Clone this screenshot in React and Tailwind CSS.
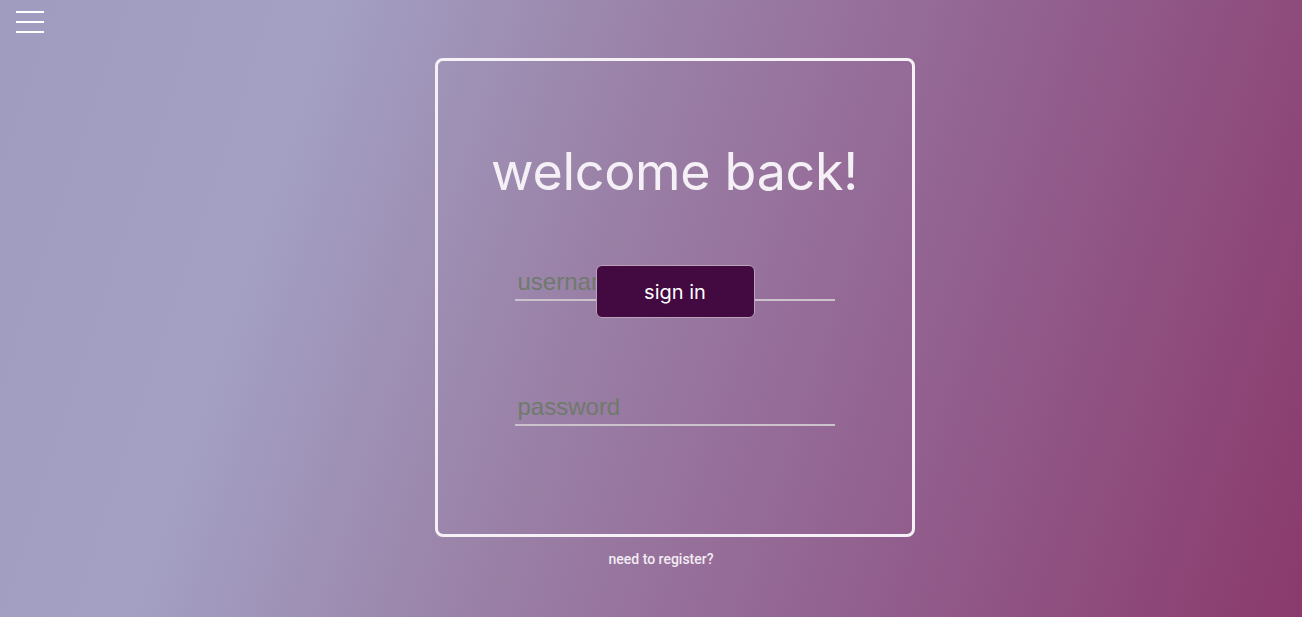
import { useState } from "react";

const App = () => {

  // =========================
  // STATES
  // =========================
  const [username, setUsername] = useState("");

  const [password, setPassword] = useState("");

  return (

    <div className="
      relative
      min-h-screen
      h-[617px]
      overflow-hidden
      bg-[linear-gradient(108deg,#9f9cbf_0%,#a3a0c4_22%,#9a80a6_45%,#92608f_70%,#8a3a6c_100%)]
      font-['Roboto',sans-serif]
    ">

      {/* MENU TOGGLE */}
      <button className="
        absolute
        left-[16px]
        top-[11px]
        flex
        flex-col
        gap-[8px]
        w-[28px]
      ">
        <span className="block h-[2px] w-full bg-white" />
        <span className="block h-[2px] w-full bg-white" />
        <span className="block h-[2px] w-full bg-white" />
      </button>

      <div className="
        flex
        flex-col
        items-center
        pt-[58px]
        pl-[47px]
      ">

        {/* =========================
            LOGIN CARD
        ========================= */}
        <div className="
          relative
          w-[480px]
          h-[479px]
          border-[3px]
          border-[#f6f1f6]
          rounded-[8px]
          flex
          flex-col
          items-center
        ">

          <h1 className="
            mt-[81px]
            text-[52px]
            leading-[60px]
            text-[#f4f0f6]
            font-['Inter',sans-serif]
            tracking-[-0.3px]
          ">
            welcome back!
          </h1>

          <input
            type="text"
            placeholder="username"
            value={username}
            onChange={(e) => setUsername(e.target.value)}
            className="
              mt-[63px]
              w-[320px]
              h-[36px]
              px-[3px]
              bg-transparent
              border-b-2
              border-[#cbc2cc]
              outline-none
              text-[24px]
              text-[#3a3a3a]
              placeholder:text-[#6f7a6c]
              font-['Liberation_Sans',sans-serif]
            "
          />

          <input
            type="password"
            placeholder="password"
            value={password}
            onChange={(e) => setPassword(e.target.value)}
            className="
              mt-[89px]
              w-[320px]
              h-[36px]
              px-[3px]
              bg-transparent
              border-b-2
              border-[#cbc2cc]
              outline-none
              text-[24px]
              text-[#3a3a3a]
              placeholder:text-[#6f7a6c]
              font-['Liberation_Sans',sans-serif]
            "
          />

          {/* SIGN IN */}
          <button className="
            absolute
            left-[158px]
            top-[204px]
            w-[159px]
            h-[53px]
            bg-[#420a40]
            border-[1.5px]
            border-[#b9a2ba]
            rounded-[6px]
            text-white
            text-[20px]
            font-['Inter',sans-serif]
          ">
            sign in
          </button>

        </div>

        <a
          href="#"
          className="
            mt-[14px]
            mr-[27px]
            text-[14px]
            leading-[16px]
            font-medium
            text-[#f3ecf3]
          "
        >
          need to register?
        </a>

      </div>
    </div>
  );
};

export default App;
